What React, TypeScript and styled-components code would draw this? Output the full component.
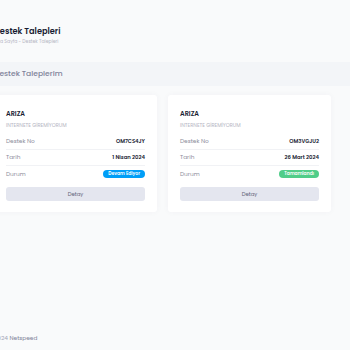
import React from "react";
import styled, { createGlobalStyle } from "styled-components";

const Global = createGlobalStyle`
  html, body { margin: 0; padding: 0; }
  body {
    background: #f9fafb;
    font-family: Poppins, Inter, "Liberation Sans", sans-serif;
    width: 350px;
    height: 350px;
    overflow: hidden;
  }
`;

const Page = styled.div`
  display: flex;
  flex-direction: column;
  height: 350px;
  margin-left: -6px;
`;

const Header = styled.div`
  padding-top: 26px;
  box-sizing: border-box;
  height: 62px;
`;

const Title = styled.h1`
  margin: 0;
  font-size: 8.2px;
  font-weight: 600;
  color: #181c32;
  line-height: 10px;
`;

const Crumbs = styled.div`
  margin-top: 3px;
  font-size: 4.6px;
  color: #b5b5c3;
  line-height: 6px;
`;

const Band = styled.div`
  height: 24px;
  background: #f3f5f8;
  display: flex;
  align-items: center;
  font-size: 7.6px;
  font-weight: 500;
  color: #7e8299;
`;

const Grid = styled.div`
  display: grid;
  grid-template-columns: 163px 163px;
  gap: 11px;
  margin-top: 9px;
`;

const Card = styled.div`
  background: #fff;
  border-radius: 3px;
  box-shadow: 0 0 6px rgba(82, 63, 105, 0.04);
  padding: 15px 12px 11px 12px;
  display: flex;
  flex-direction: column;
`;

const CardTitle = styled.div`
  font-size: 6.5px;
  font-weight: 600;
  color: #181c32;
  line-height: 8px;
`;

const CardSub = styled.div`
  margin-top: 5px;
  margin-bottom: 5px;
  font-size: 5.1px;
  color: #b5b5c3;
  text-transform: uppercase;
  line-height: 6px;
`;

const Row = styled.div<{ $last?: boolean }>`
  display: flex;
  justify-content: space-between;
  align-items: center;
  height: 16px;
  box-sizing: border-box;
  border-bottom: ${(p) => (p.$last ? "none" : "1px solid #f1f2f5")};
`;

const Label = styled.span`
  color: #8c8e9b;
  font-size: 5.8px;
`;

const Value = styled.span`
  color: #181c32;
  font-weight: 600;
  font-size: 5.3px;
`;

const Badge = styled.span<{ $color: string }>`
  background: ${(p) => p.$color};
  color: #fff;
  font-size: 4.5px;
  font-weight: 600;
  border-radius: 4px;
  padding: 1px 5px;
  line-height: 6px;
`;

const Button = styled.button`
  margin-top: 5px;
  height: 14px;
  border: none;
  border-radius: 3px;
  background: #e4e6ef;
  color: #5e6278;
  font-family: inherit;
  font-size: 5.3px;
  padding: 0;
`;

const Spacer = styled.div`
  flex: 1;
`;

const Footer = styled.div`
  font-size: 5.8px;
  color: #a1a5b7;
  padding-bottom: 9px;
  line-height: 6px;
`;

const FooterBrand = styled.span`
  color: #7e8299;
`;

const tickets = [
  { no: "OM7CS4JY", date: "1 Nisan 2024", status: "Devam Ediyor", color: "#009ef7" },
  { no: "OM3VGJU2", date: "26 Mart 2024", status: "Tamamlandı", color: "#50cd89" },
];

export default function App() {
  return (
    <>
      <Global />
      <Page>
        <Header>
          <Title>Destek Talepleri</Title>
          <Crumbs>Ana Sayfa - Destek Talepleri</Crumbs>
        </Header>
        <Band>Destek Taleplerim</Band>
        <Grid>
          {tickets.map((t) => (
            <Card key={t.no}>
              <CardTitle>ARIZA</CardTitle>
              <CardSub>INTERNETE GİREMİYORUM</CardSub>
              <Row>
                <Label>Destek No</Label>
                <Value>{t.no}</Value>
              </Row>
              <Row>
                <Label>Tarih</Label>
                <Value>{t.date}</Value>
              </Row>
              <Row $last>
                <Label>Durum</Label>
                <Badge $color={t.color}>{t.status}</Badge>
              </Row>
              <Button>Detay</Button>
            </Card>
          ))}
        </Grid>
        <Spacer />
        <Footer>
          2024 <FooterBrand>Netspeed</FooterBrand>
        </Footer>
      </Page>
    </>
  );
}
